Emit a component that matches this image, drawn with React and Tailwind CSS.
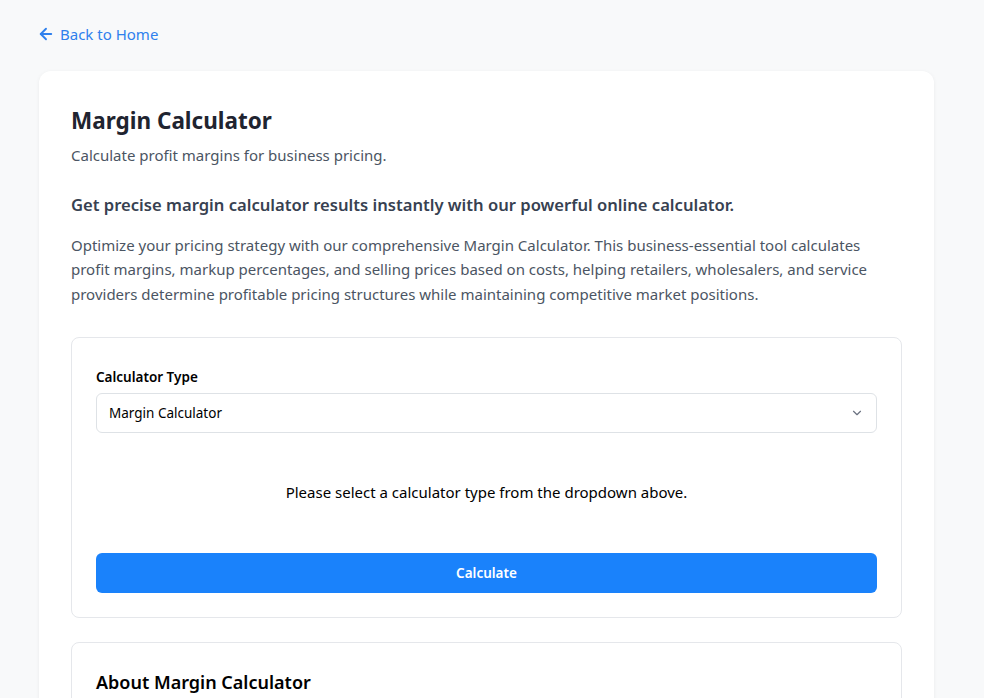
import { ArrowLeft, ChevronDown } from "lucide-react";

export default function App() {
  return (
    <div className="min-h-screen bg-[#f8f9fa] font-['Noto_Sans',sans-serif] text-[#212529]">
      <div className="ml-[39px] w-[895px] pt-[23px]">
        <a href="#" className="flex items-center gap-[5px] text-[15px] text-[#2f80ed]">
          <ArrowLeft size={18} strokeWidth={2.5} className="-ml-[2px]" />
          Back to Home
        </a>
        <div className="mt-[25px] rounded-[12px] bg-white px-[32px] pt-[34px] pb-[40px] shadow-[0_1px_4px_rgba(0,0,0,0.06)]">
          <h1 className="text-[22.5px] font-bold leading-[32px] text-[#1f2430]">Margin Calculator</h1>
          <p className="mt-[7px] text-[15px] text-[#4b5563]">Calculate profit margins for business pricing.</p>
          <h2 className="mt-[27px] text-[16.6px] font-semibold text-[#374151]">
            Get precise margin calculator results instantly with our powerful online calculator.
          </h2>
          <p className="mt-[15px] text-[15px] leading-[24.5px] text-[#4b5563]">
            Optimize your pricing strategy with our comprehensive Margin Calculator. This business-essential tool calculates
            profit margins, markup percentages, and selling prices based on costs, helping retailers, wholesalers, and service
            providers determine profitable pricing structures while maintaining competitive market positions.
          </p>

          <div className="mt-[31px] rounded-[8px] border border-[#e5e7eb] px-[24px] pt-[29px] pb-[24px]">
            <label className="block text-[13.5px] font-semibold text-black">Calculator Type</label>
            <div className="mt-[5px] flex h-[40px] items-center justify-between rounded-[6px] border border-[#dee2e6] px-[12px] text-[13.5px] text-black">
              <span>Margin Calculator</span>
              <ChevronDown size={14} className="text-[#6b7280]" />
            </div>
            <p className="mt-[48px] text-center text-[15px] text-black">
              Please select a calculator type from the dropdown above.
            </p>
            <button className="mt-[50px] h-[40px] w-full rounded-[6px] bg-[#1a82fb] text-[13.5px] font-semibold text-white">
              Calculate
            </button>
          </div>

          <div className="mt-[24px] rounded-[8px] border border-[#e5e7eb] px-[24px] pt-[26px] pb-[24px]">
            <h3 className="text-[18px] font-semibold text-black">About Margin Calculator</h3>
          </div>
        </div>
      </div>
    </div>
  );
}
